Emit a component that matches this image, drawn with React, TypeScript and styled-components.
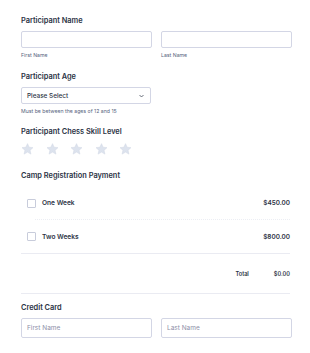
import styled, { createGlobalStyle } from "styled-components";

const Global = createGlobalStyle`
  html, body { margin: 0; padding: 0; background: #fff; }
  body { font-family: Inter, "Noto Sans", sans-serif; color: #2c3345; }
  * { box-sizing: border-box; }
`;

const Form = styled.form`
  width: 310px;
  padding: 16px 19px 0 21px;
`;

const Field = styled.div<{ $gap?: number }>`
  margin-bottom: ${(p) => p.$gap ?? 14}px;
`;

const Label = styled.div`
  font-size: 7.4px;
  font-weight: 600;
  line-height: 10px;
  color: #2c3345;
  margin-bottom: 5px;
`;

const Row = styled.div`
  display: grid;
  grid-template-columns: 131px 131px;
  column-gap: 9px;
`;

const Input = styled.input<{ $tall?: boolean }>`
  display: block;
  width: 100%;
  height: ${(p) => (p.$tall ? 20 : 17)}px;
  border: 1px solid #d3d6e5;
  border-radius: 2px;
  background: #fff;
  font-family: inherit;
  font-size: 6.5px;
  color: #2c3345;
  padding: 0 5px;
  &::placeholder { color: #8d8fa8; }
`;

const Sub = styled.div`
  font-size: 5.2px;
  color: #57647e;
  margin-top: 3px;
  line-height: 8px;
`;

const Select = styled.div`
  width: 130px;
  height: 17px;
  border: 1px solid #d3d6e5;
  border-radius: 2px;
  display: flex;
  align-items: center;
  justify-content: space-between;
  padding: 0 6px 0 5px;
  font-size: 6.4px;
  font-weight: 500;
  color: #2c3345;
`;

const Stars = styled.div`
  display: flex;
  gap: 11.5px;
  padding-top: 1px;
`;

const Payment = styled.div`
  padding-top: 2px;
`;

const Item = styled.div<{ $dotted?: boolean }>`
  display: flex;
  align-items: center;
  height: 34px;
  padding-left: 6px;
  margin-right: 1px;
  position: relative;
  border-bottom: ${(p) => (p.$dotted ? "none" : "1px solid #eaebf2")};
  &::after {
    content: "";
    display: ${(p) => (p.$dotted ? "block" : "none")};
    position: absolute;
    left: 14px;
    right: 0;
    bottom: 0;
    border-bottom: 1px dotted #eceef4;
  }
`;

const Box = styled.span`
  width: 9px;
  height: 9px;
  border: 1px solid #c8ccdb;
  border-radius: 1px;
  margin-right: 6px;
`;

const ItemName = styled.span`
  font-size: 6.6px;
  font-weight: 600;
  flex: 1;
`;

const Price = styled.span`
  font-size: 6.4px;
  font-weight: 600;
  color: #2c3345;
`;

const TotalRow = styled.div`
  display: flex;
  justify-content: flex-end;
  align-items: center;
  height: 40px;
  border-bottom: 1px solid #eaebf2;
  margin-right: 1px;
  gap: 25px;
  font-size: 5.6px;
  font-weight: 600;
  margin-bottom: 9px;
`;

function Star() {
  return (
    <svg width="13" height="12" viewBox="0 0 24 23">
      <path
        d="M12 1.2l3.1 6.9 7.4.8-5.6 5 1.6 7.4L12 17.4l-6.5 3.9 1.6-7.4-5.6-5 7.4-.8z"
        fill="#dde3ee"
        stroke="#d0d7e4"
        strokeWidth="1"
        strokeLinejoin="round"
      />
    </svg>
  );
}

function Chevron() {
  return (
    <svg width="5" height="4" viewBox="0 0 10 6">
      <path d="M1 1l4 4 4-4" fill="none" stroke="#2c3345" strokeWidth="1.4" />
    </svg>
  );
}

export default function App() {
  return (
    <>
      <Global />
      <Form>
        <Field $gap={13}>
          <Label>Participant Name</Label>
          <Row>
            <div>
              <Input />
              <Sub>First Name</Sub>
            </div>
            <div>
              <Input />
              <Sub>Last Name</Sub>
            </div>
          </Row>
        </Field>
        <Field $gap={12}>
          <Label>Participant Age</Label>
          <Select>
            Please Select
            <Chevron />
          </Select>
          <Sub>Must be between the ages of 12 and 15</Sub>
        </Field>
        <Field $gap={14}>
          <Label>Participant Chess Skill Level</Label>
          <Stars>
            <Star />
            <Star />
            <Star />
            <Star />
            <Star />
          </Stars>
        </Field>
        <Payment>
          <Label>Camp Registration Payment</Label>
          <Item $dotted>
            <Box />
            <ItemName>One Week</ItemName>
            <Price>$450.00</Price>
          </Item>
          <Item>
            <Box />
            <ItemName>Two Weeks</ItemName>
            <Price>$800.00</Price>
          </Item>
          <TotalRow>
            <span>Total</span>
            <span>$0.00</span>
          </TotalRow>
        </Payment>
        <Field>
          <Label>Credit Card</Label>
          <Row>
            <Input $tall placeholder="First Name" />
            <Input $tall placeholder="Last Name" />
          </Row>
        </Field>
      </Form>
    </>
  );
}
